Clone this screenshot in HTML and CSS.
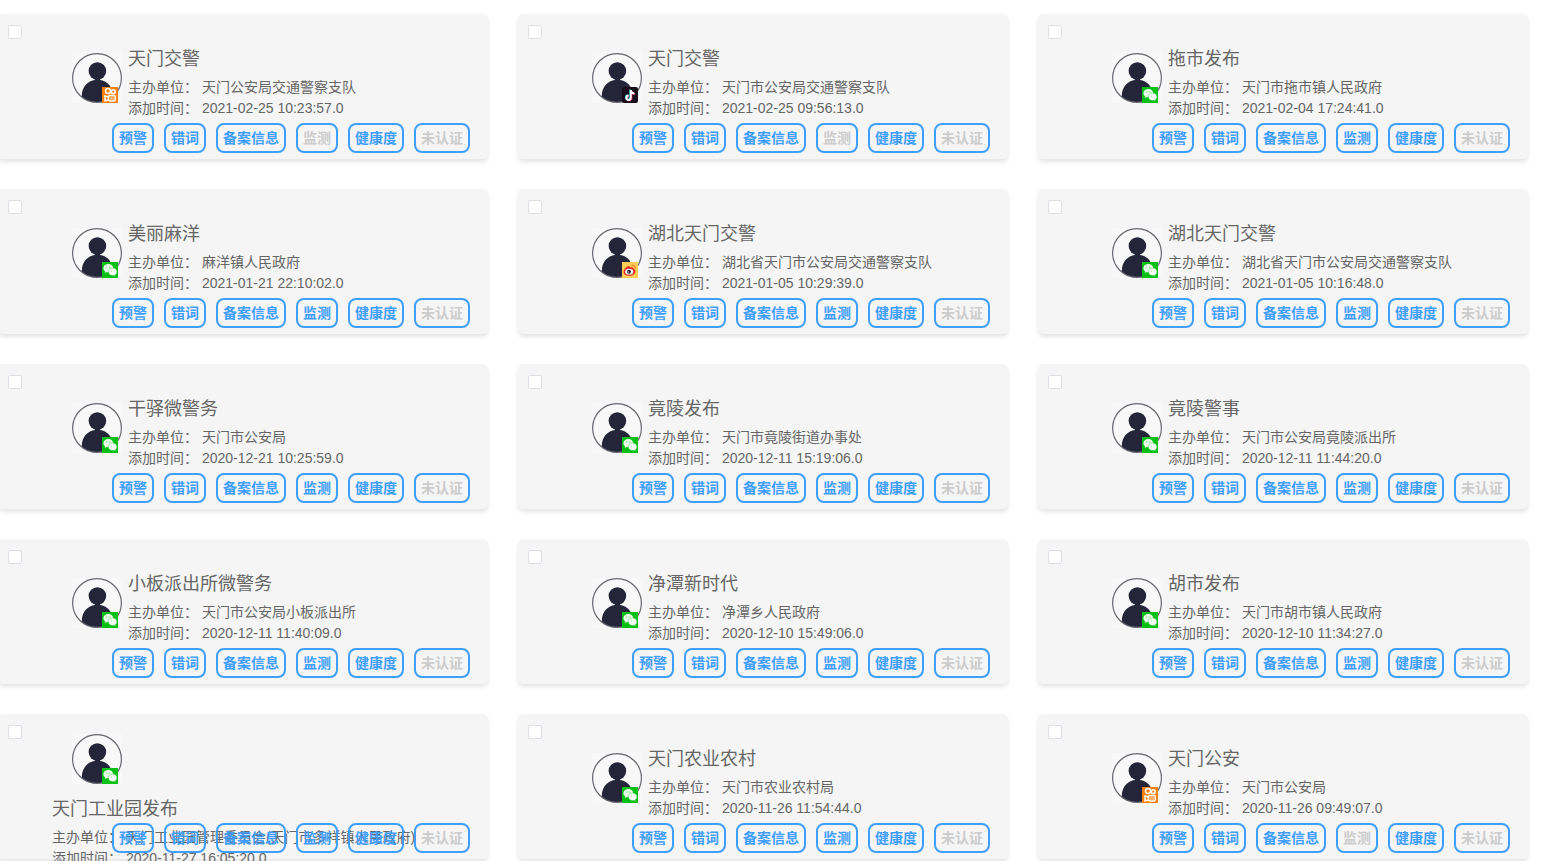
FILE: index.html
```html
<!DOCTYPE html>
<html lang="zh-CN">
<head>
  <meta charset="UTF-8" />
  <meta name="viewport" content="width=device-width, initial-scale=1.0" />
  <title>账号列表</title>
  <link rel="stylesheet" href="styles.css">
</head>
<body>
  <svg class="sprite" aria-hidden="true">
    <symbol id="icon-user" viewBox="0 0 50 50">
      <defs>
        <clipPath id="user-clip"><circle cx="25" cy="25" r="24.5" /></clipPath>
      </defs>
      <rect width="50" height="50" fill="#f8f8f8" />
      <g clip-path="url(#user-clip)" fill="#25253a">
        <path d="M9.800 50V43C9.800 34 16 27.500 23 27V25H28V27C35 27.500 41 34 41 43V50Z" />
        <circle cx="25.400" cy="18" r="8.800" />
      </g>
      <circle cx="25" cy="25" r="24.400" fill="none" stroke="#66666f" stroke-width="1.200" />
    </symbol>
    <symbol id="icon-wechat" viewBox="0 0 16 16">
      <rect width="16" height="16" fill="#0abf16" />
      <path d="M6.300 2.100C3.500 2.100 1.400 3.900 1.400 6.200c0 1.300.7 2.400 1.800 3.200L2.800 11l1.900-1c.5.1 1 .2 1.600.2 2.800 0 4.900-1.800 4.900-4.100S9.100 2.100 6.300 2.100Z" fill="#e9fbe9" />
      <path d="M10.700 6.100c-2.500 0-4.300 1.600-4.300 3.700s1.800 3.700 4.300 3.700c.5 0 .9-.1 1.300-.2l1.600.8-.4-1.300c1.100-.7 1.700-1.700 1.700-3 0-2.100-1.800-3.700-4.200-3.700Z" fill="#fff" stroke="#0abf16" stroke-width=".4" />
      <g fill="#0abf16"><circle cx="4.800" cy="5" r=".5" /><circle cx="7.800" cy="5" r=".5" /><circle cx="9.400" cy="9" r=".4" /><circle cx="12" cy="9" r=".4" /></g>
    </symbol>
    <symbol id="icon-kuaishou" viewBox="0 0 16 16">
      <rect width="16" height="16" fill="#f77f0a" />
      <g fill="none" stroke="#fff" stroke-width="1.500">
        <circle cx="6" cy="3.900" r="2.500" />
        <circle cx="11.300" cy="4.700" r="1.900" />
        <rect x="6.500" y="8.600" width="6.800" height="5.500" rx="1.500" />
        <path d="M6.500 10 3 9v4.700l3.500-.8" />
      </g>
      <path d="M9 9.500v3.700M11 9.500v3.700" stroke="#fff" stroke-width=".8" />
    </symbol>
    <symbol id="icon-douyin" viewBox="0 0 16 16">
      <rect width="16" height="16" rx="2" fill="#170b1c" />
      <g fill="none" stroke-width="1.800">
        <path d="M8.200 2.500v7.800a2.200 2.200 0 1 1-2.200-2.200M8.200 3c.4 2 1.700 3 3.600 3.100" stroke="#25e5e0" />
        <path d="M9.400 3.400v7.800a2.200 2.200 0 1 1-2.200-2.200M9.400 3.900c.4 2 1.700 3 3.600 3.100" stroke="#f0315b" />
        <path d="M8.800 3v7.800a2.200 2.200 0 1 1-2.200-2.200M8.800 3.500c.4 2 1.700 3 3.600 3.100" stroke="#fff" />
      </g>
    </symbol>
    <symbol id="icon-weibo" viewBox="0 0 16 16">
      <rect width="16" height="16" fill="#fdcd55" />
      <path d="M6.300 4.300c1.300-.4 2 .2 1.800 1.200 2-.7 3.400-.2 3 1.100 1.300.4 2.300 1.100 2.300 2.600 0 2.400-2.700 4.600-6.200 4.600-3.300 0-5.600-1.600-5.600-3.900 0-2.500 2.500-5 4.700-5.600Z" fill="#e52a25" />
      <ellipse cx="7.200" cy="9.700" rx="4.100" ry="2.900" fill="#fff" />
      <circle cx="7" cy="9.800" r="2" fill="#15202a" />
      <circle cx="6.300" cy="9.900" r=".6" fill="#fff" />
      <path d="M9.500 3.300c2.200-.4 4 1.200 3.700 3.400" fill="none" stroke="#ef7d22" stroke-width="1.200" />
    </symbol>
  </svg>

  <main class="account-list" id="account-list"></main>

  <script>
    // monitor: false -> 监测按钮置灰
    const accounts = [
      { name: '天门交警', unit: '天门公安局交通警察支队', time: '2021-02-25 10:23:57.0', type: 'kuaishou', monitor: false },
      { name: '天门交警', unit: '天门市公安局交通警察支队', time: '2021-02-25 09:56:13.0', type: 'douyin', monitor: false },
      { name: '拖市发布', unit: '天门市拖市镇人民政府', time: '2021-02-04 17:24:41.0', type: 'wechat', monitor: true },
      { name: '美丽麻洋', unit: '麻洋镇人民政府', time: '2021-01-21 22:10:02.0', type: 'wechat', monitor: true },
      { name: '湖北天门交警', unit: '湖北省天门市公安局交通警察支队', time: '2021-01-05 10:29:39.0', type: 'weibo', monitor: true },
      { name: '湖北天门交警', unit: '湖北省天门市公安局交通警察支队', time: '2021-01-05 10:16:48.0', type: 'wechat', monitor: true },
      { name: '干驿微警务', unit: '天门市公安局', time: '2020-12-21 10:25:59.0', type: 'wechat', monitor: true },
      { name: '竟陵发布', unit: '天门市竟陵街道办事处', time: '2020-12-11 15:19:06.0', type: 'wechat', monitor: true },
      { name: '竟陵警事', unit: '天门市公安局竟陵派出所', time: '2020-12-11 11:44:20.0', type: 'wechat', monitor: true },
      { name: '小板派出所微警务', unit: '天门市公安局小板派出所', time: '2020-12-11 11:40:09.0', type: 'wechat', monitor: true },
      { name: '净潭新时代', unit: '净潭乡人民政府', time: '2020-12-10 15:49:06.0', type: 'wechat', monitor: true },
      { name: '胡市发布', unit: '天门市胡市镇人民政府', time: '2020-12-10 11:34:27.0', type: 'wechat', monitor: true },
      { name: '天门工业园发布', unit: '天门工业园管理委员会(天门市多祥镇人民政府)', time: '2020-11-27 16:05:20.0', type: 'wechat', monitor: true },
      { name: '天门农业农村', unit: '天门市农业农村局', time: '2020-11-26 11:54:44.0', type: 'wechat', monitor: true },
      { name: '天门公安', unit: '天门市公安局', time: '2020-11-26 09:49:07.0', type: 'kuaishou', monitor: false },
    ];

    document.getElementById('account-list').innerHTML = accounts.map((item) => `
      <article class="card">
        <input type="checkbox" class="card-check" aria-label="选择${item.name}">
        <div class="card-info">
          <div class="avatar">
            <svg class="avatar-img"><use href="#icon-user" /></svg>
            <svg class="avatar-badge"><use href="#icon-${item.type}" /></svg>
          </div>
          <div class="card-text">
            <h3>${item.name}</h3>
            <p>主办单位： ${item.unit}</p>
            <p>添加时间： ${item.time}</p>
          </div>
        </div>
        <div class="card-actions">
          <button type="button">预警</button>
          <button type="button">错词</button>
          <button type="button">备案信息</button>
          <button type="button" ${item.monitor ? '' : 'disabled'}>监测</button>
          <button type="button">健康度</button>
          <button type="button" disabled>未认证</button>
        </div>
      </article>
    `).join('');
  </script>
</body>
</html>
```
FILE: styles.css
```css
:root {
  --primary: #409eff;
  --text-color: #666;
  --disabled-color: #ccc;
  --card-bg: #f5f5f5;
}

* {
  box-sizing: border-box;
}

body {
  margin: 0;
  height: 100vh;
  overflow: hidden;
  font-family: "Liberation Sans", "Noto Sans CJK SC", sans-serif;
  font-size: 14px;
  color: var(--text-color);
  background-color: #fff;
}

.sprite {
  position: absolute;
  width: 0;
  height: 0;
}

.account-list {
  display: grid;
  grid-template-columns: repeat(3, 1fr);
  gap: 30px;
  margin: 0 32px 0 -2px;
  padding-top: 14px;
}

.card {
  position: relative;
  min-width: 0;
  padding: 20px 18px 6px 54px;
  border-radius: 5px;
  background-color: var(--card-bg);
  box-shadow: 0 3px 4px rgba(0, 0, 0, 0.1);
}

.card-check {
  appearance: none;
  position: absolute;
  top: 11px;
  left: 10px;
  width: 14px;
  height: 14px;
  margin: 0;
  border: 1px solid #dcdfe6;
  border-radius: 2px;
  background-color: #fff;
  cursor: pointer;
}

.card-check:checked {
  border-color: var(--primary);
  background-color: var(--primary);
}

/* long names wrap below the avatar and run under the buttons */
.card-info {
  display: flex;
  flex-wrap: wrap;
  align-items: center;
  align-content: safe center;
  row-gap: 3px;
  height: 87px;
  margin-bottom: 2px;
}

.avatar {
  position: relative;
  width: 50px;
  height: 50px;
  margin: 0 6px 0 20px;
}

.avatar-img {
  display: block;
  width: 50px;
  height: 50px;
}

.avatar-badge {
  position: absolute;
  right: 4px;
  bottom: 0;
  width: 16px;
  height: 16px;
}

.card-text {
  white-space: nowrap;
}

h3 {
  margin: 0;
  padding-top: 4px;
  font-size: 18px;
  font-weight: 400;
  line-height: 36px;
}

p {
  margin: 0;
  line-height: 21px;
}

.card-actions {
  position: relative;
  display: flex;
  justify-content: flex-end;
  gap: 10px;
}

button {
  height: 30px;
  padding: 0 5px 2px;
  border: 2px solid var(--primary);
  border-radius: 8px;
  background-color: transparent;
  color: var(--primary);
  font-family: inherit;
  font-size: 14px;
  font-weight: 700;
  white-space: nowrap;
  cursor: pointer;
}

button:disabled {
  color: var(--disabled-color);
  cursor: default;
}
```
